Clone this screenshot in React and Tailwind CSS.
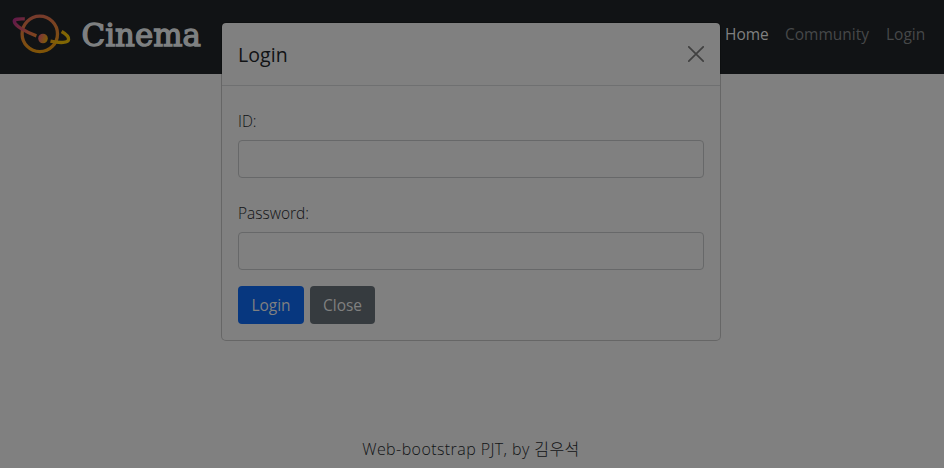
function Logo() {
  return (
    <svg width="214" height="64" viewBox="0 0 214 64" className="block" role="img" aria-label="Cinema">
      <defs>
        <linearGradient id="orbit" gradientUnits="userSpaceOnUse" x1="13" y1="20" x2="60" y2="46">
          <stop offset="0" stopColor="#60184a" />
          <stop offset="0.35" stopColor="#7c3a2a" />
          <stop offset="0.8" stopColor="#805a08" />
          <stop offset="1" stopColor="#806603" />
        </linearGradient>
        <linearGradient id="planet" gradientUnits="userSpaceOnUse" x1="36" y1="15" x2="43" y2="53">
          <stop offset="0" stopColor="#763a2d" />
          <stop offset="1" stopColor="#805506" />
        </linearGradient>
        <linearGradient id="core" x1="0" y1="0.3" x2="1" y2="0.7">
          <stop offset="0" stopColor="#7b3040" />
          <stop offset="1" stopColor="#806003" />
        </linearGradient>
      </defs>
      <circle cx="39.8" cy="33.9" r="17.7" fill="none" stroke="url(#planet)" strokeWidth="3.3" />
      <path
        d="M24.8 18.9C18 18.6 14 19.2 14.3 21.5C14.8 25.5 25 31.8 36.4 35.8M50.5 41.2C61 43.3 68 42.8 68.6 39.5C69 37 66.5 34.2 61.6 31.4"
        fill="none"
        stroke="url(#orbit)"
        strokeWidth="3.4"
      />
      <circle cx="43" cy="38.5" r="4.8" fill="url(#core)" />
      <text
        x="81.5"
        y="46"
        textLength="119.5"
        lengthAdjust="spacingAndGlyphs"
        fill="#7e8081"
        stroke="#7e8081"
        strokeWidth="1.4"
        className="font-['DejaVu_Serif',serif] text-[32px] font-normal"
      >
        Cinema
      </text>
    </svg>
  );
}

function Field({ label, type }) {
  return (
    <label className="block">
      <span className="block h-6 text-[15.5px] leading-6 font-light">{label}</span>
      <input type={type} className="mt-[7px] block h-[38px] w-full rounded border border-[#676869] bg-transparent px-3 outline-none" />
    </label>
  );
}

export default function App() {
  return (
    <div className="relative flex h-[468px] w-[944px] flex-col overflow-hidden bg-[#808080] font-['Open_Sans','Noto_Sans_CJK_KR',sans-serif] text-[15.5px] text-[#111315]">
      <header className="flex h-[74px] shrink-0 items-start justify-between bg-[#111315] pr-[18px]">
        <Logo />
        <nav className="flex gap-4 pt-[22px] leading-6 text-[#464849]">
          <a className="w-11 whitespace-nowrap text-[#808080]">Home</a>
          <a className="w-[85px] whitespace-nowrap">Community</a>
          <a className="w-10 whitespace-nowrap">Login</a>
        </nav>
      </header>
      <main className="flex-1" />
      <footer className="flex h-[31px] shrink-0 justify-center pr-[2px] leading-6">
        <p className="text-[16px] font-light tracking-[0.42px] whitespace-nowrap">Web-bootstrap PJT, by 김우석</p>
      </footer>

      <div role="dialog" className="absolute top-[22px] left-[221px] h-[319px] w-[500px] rounded-[5px] border border-black/20 bg-[#808080] bg-clip-padding">
        <div className="flex h-[63px] items-center justify-between border-b border-[#6f7071] px-4">
          <h5 className="pt-[2px] text-[19.5px] leading-[30px] tracking-[0.1px]">Login</h5>
          <button aria-label="Close" className="text-[#404040]">
            <svg width="16" height="16" viewBox="0 0 16 16" fill="none" stroke="currentColor" strokeWidth="1.7" strokeLinecap="round">
              <path d="M0.8 0.8L15.2 15.2M15.2 0.8L0.8 15.2" />
            </svg>
          </button>
        </div>
        <form className="flex flex-col px-4 pt-[23px]">
          <Field label="ID:" type="text" />
          <div className="h-[23px]" />
          <Field label="Password:" type="password" />
          <div className="mt-4 flex gap-[6px] text-[#808080]">
            <button type="button" className="h-[38px] w-[66px] rounded bg-[#07377f] pt-[2px]">Login</button>
            <button type="button" className="h-[38px] w-[65px] rounded bg-[#363b3f] pt-[2px]">Close</button>
          </div>
        </form>
      </div>
    </div>
  );
}
